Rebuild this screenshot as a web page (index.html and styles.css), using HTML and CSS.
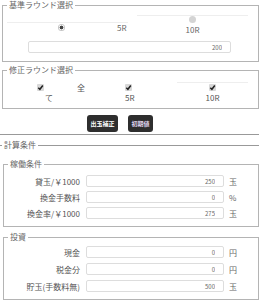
FILE: index.html
```html
<!DOCTYPE html>
<html lang="ja">
<head>
    <meta charset="UTF-8">
    <title>計算</title>
    <link rel="stylesheet" href="styles.css">
</head>
<body>

<fieldset class="box">
    <legend>基準ラウンド選択</legend>
    <div class="radio-row">
        <div class="radio-cell first">
            <span class="radio on"></span>
            <span class="radio-label">5R</span>
        </div>
        <div class="radio-cell second">
            <span class="radio"></span>
            <span class="radio-label">10R</span>
        </div>
    </div>
    <input type="text" class="num wide" value="200">
</fieldset>

<fieldset class="box fix">
    <legend>修正ラウンド選択</legend>
    <div class="check-row">
        <div class="check-cell all">
            <div class="check-line">
                <span class="check"><svg viewBox="0 0 7 7"><path d="M1.3 3.7 L2.9 5.3 L5.8 1.5"/></svg></span>
                <span class="all-a">全</span>
            </div>
            <div class="all-b">て</div>
        </div>
        <div class="check-cell five">
            <span class="check"><svg viewBox="0 0 7 7"><path d="M1.3 3.7 L2.9 5.3 L5.8 1.5"/></svg></span>
            <span class="check-label">5R</span>
        </div>
        <div class="check-cell ten">
            <span class="check"><svg viewBox="0 0 7 7"><path d="M1.3 3.7 L2.9 5.3 L5.8 1.5"/></svg></span>
            <span class="check-label">10R</span>
        </div>
    </div>
</fieldset>

<div class="actions">
    <button class="btn btn-fix">出玉補正</button>
    <button class="btn btn-reset">初期値</button>
</div>

<fieldset class="calc">
    <legend>計算条件</legend>

    <fieldset class="sub work">
        <legend>稼働条件</legend>
        <div class="row">
            <span class="label">貸玉/￥1000</span>
            <input type="text" class="num" value="250">
            <span class="unit">玉</span>
        </div>
        <div class="row">
            <span class="label">換金手数料</span>
            <input type="text" class="num" value="0">
            <span class="unit">%</span>
        </div>
        <div class="row">
            <span class="label">換金率/￥1000</span>
            <input type="text" class="num" value="275">
            <span class="unit">玉</span>
        </div>
    </fieldset>

    <fieldset class="sub invest">
        <legend>投資</legend>
        <div class="row">
            <span class="label">現金</span>
            <input type="text" class="num" value="0">
            <span class="unit">円</span>
        </div>
        <div class="row">
            <span class="label">税金分</span>
            <input type="text" class="num" value="0">
            <span class="unit">円</span>
        </div>
        <div class="row">
            <span class="label">貯玉(手数料無)</span>
            <input type="text" class="num" value="500">
            <span class="unit">玉</span>
        </div>
    </fieldset>
</fieldset>

</body>
</html>
```

FILE: styles.css
```css
body {
    margin: 0;
    padding-top: 1px;
    font-family: "Noto Sans CJK JP", "Noto Sans", sans-serif;
    font-size: 8px;
    color: #555;
    background: #fff;
}
fieldset {
    margin: 0;
    padding: 0;
    min-width: 0;
    border: 1px solid #b4b4b4;
}
legend {
    margin-left: 4px;
    padding: 0 2px;
    font-size: 8px;
    line-height: 8px;
    color: #666;
}
.box {
    margin: 0 2px;
    padding-bottom: 8px;
}
.box.fix {
    margin-top: 4px;
    padding-bottom: 5px;
}

/* radio buttons */
.radio-row {
    display: flex;
    align-items: flex-start;
}
.radio-cell {
    border-top: 1px solid #eee;
}
.radio-cell.first {
    margin: 13px 0 0 4px;
    width: 121px;
    height: 8px;
    display: flex;
    align-items: center;
}
.radio-cell.first .radio {
    margin-left: 51px;
}
.radio-cell.first .radio-label {
    margin-left: 52px;
}
.radio-cell.second {
    margin: 6px 0 0 9px;
    width: 111px;
    display: flex;
    flex-direction: column;
    align-items: center;
}
.radio-cell.second .radio-label {
    margin-top: 2px;
    line-height: 10px;
}
.radio {
    display: block;
    width: 7px;
    height: 7px;
    border-radius: 50%;
    background: #d4d4d4;
}
.radio.on {
    background: radial-gradient(circle, #444 0 1.6px, #f4f4f4 2.2px 2.6px, #c4c4c4 3px);
}
.radio-label {
    color: #666;
}

/* inputs */
input.num {
    box-sizing: border-box;
    height: 12px;
    margin: 0;
    padding: 0 8px 0 0;
    border: 1px solid #ddd;
    border-radius: 2px;
    background: #fff;
    font-family: "Noto Sans CJK JP", "Noto Sans", sans-serif;
    font-size: 6px;
    color: #666;
    text-align: right;
    outline: none;
}
input.wide {
    display: block;
    margin: 6px 0 0 25px;
    width: 203px;
}

/* check boxes */
.check-row {
    display: flex;
    align-items: flex-start;
    margin-top: 8px;
}
.check {
    display: block;
    width: 7px;
    height: 7px;
    background: #d8d8d8;
    border-radius: 1px;
}
.check svg {
    display: block;
    width: 7px;
    height: 7px;
}
.check path {
    fill: none;
    stroke: #222;
    stroke-width: 1.5;
}
.check-cell.all {
    margin-left: 4px;
    width: 106px;
    padding-top: 1px;
}
.check-line {
    display: flex;
    align-items: center;
    height: 8px;
}
.check-line .check {
    margin-left: 30px;
}
.all-a {
    margin-left: 33px;
}
.all-b {
    margin: 2px 0 0 38px;
    line-height: 10px;
}
.check-cell.five {
    margin-left: 12px;
    width: 52px;
    padding-top: 2px;
}
.check-cell.ten {
    width: 71px;
    padding-top: 1px;
    border-top: 1px solid #eee;
    display: flex;
    flex-direction: column;
    align-items: center;
}
.check-label {
    display: block;
    margin-top: 2px;
    line-height: 10px;
}

/* buttons */
.actions {
    display: flex;
    gap: 10px;
    margin: 6px 2px 0 0;
    padding: 0 0 2px 87px;
    border-bottom: 1px solid #999;
}
.btn {
    height: 17px;
    padding: 0;
    border: none;
    border-radius: 3px;
    background: #2e2e2e;
    font-family: "Noto Sans CJK JP", "Noto Sans", sans-serif;
    font-size: 6px;
    font-weight: bold;
    color: #fff;
}
.btn-fix {
    width: 31px;
}
.btn-reset {
    width: 25px;
    color: #e2d8f2;
}

/* calculation */
.calc {
    border: none;
    border-top: 1px solid #999;
    margin: 6px 2px 0 0;
}
.calc > legend {
    margin-left: 2px;
}
.sub {
    margin: 11px 0 0 3px;
    padding-bottom: 7px;
}
.sub.invest {
    margin-top: 6px;
}
.row {
    display: flex;
    align-items: center;
    margin-top: 4px;
}
.row:first-of-type {
    margin-top: 7px;
}
.invest .row {
    margin-top: 5px;
}
.invest .row:first-of-type {
    margin-top: 5px;
}
.label {
    width: 76px;
    text-align: right;
}
.row input.num {
    margin-left: 6px;
    width: 138px;
}
.unit {
    margin-left: 5px;
    color: #666;
}
```
